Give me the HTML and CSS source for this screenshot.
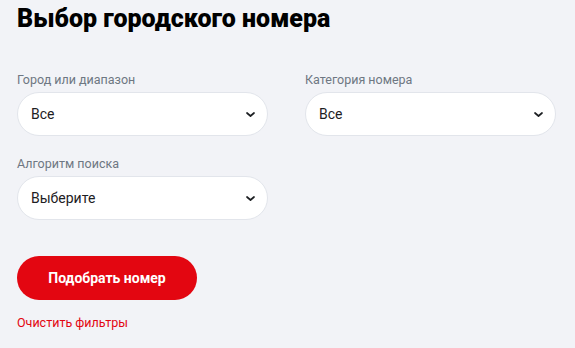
FILE: index.html
```html
<!DOCTYPE html>
<html lang="ru">
<head>
<meta charset="utf-8">
<title>Выбор городского номера</title>
<link rel="stylesheet" href="styles.css">
</head>
<body>
<main class="page">
  <h1 class="title">Выбор городского номера</h1>
  <div class="filters">
    <div class="field">
      <label class="label">Город или диапазон</label>
      <div class="select"><span>Все</span>
        <svg class="chev" width="9" height="5" viewBox="0 0 9 5"><path d="M1 1 L4.5 4 L8 1" fill="none" stroke="#1d2023" stroke-width="1.7" stroke-linecap="round" stroke-linejoin="round"/></svg>
      </div>
    </div>
    <div class="field">
      <label class="label">Категория номера</label>
      <div class="select"><span>Все</span>
        <svg class="chev" width="9" height="5" viewBox="0 0 9 5"><path d="M1 1 L4.5 4 L8 1" fill="none" stroke="#1d2023" stroke-width="1.7" stroke-linecap="round" stroke-linejoin="round"/></svg>
      </div>
    </div>
    <div class="field">
      <label class="label">Алгоритм поиска</label>
      <div class="select"><span>Выберите</span>
        <svg class="chev" width="9" height="5" viewBox="0 0 9 5"><path d="M1 1 L4.5 4 L8 1" fill="none" stroke="#1d2023" stroke-width="1.7" stroke-linecap="round" stroke-linejoin="round"/></svg>
      </div>
    </div>
  </div>
  <button class="submit">Подобрать номер</button>
  <a class="reset" href="#">Очистить фильтры</a>
</main>
</body>
</html>
```

FILE: styles.css
```css
html, body {
  margin: 0;
  padding: 0;
  background: #f2f3f7;
}
body {
  font-family: Roboto, "Noto Sans", Arial, sans-serif;
  color: #1d2023;
}
.page {
  padding: 5px 19px 0 17px;
  display: flex;
  flex-direction: column;
  align-items: flex-start;
}
.title {
  margin: 0;
  font-size: 25px;
  line-height: 28px;
  font-weight: 900;
  color: #000;
}
.filters {
  margin-top: 39px;
  width: 539px;
  display: grid;
  grid-template-columns: 251px 251px;
  column-gap: 37px;
  row-gap: 20px;
}
.field {
  display: flex;
  flex-direction: column;
  gap: 4px;
}
.label {
  font-size: 12.5px;
  line-height: 16px;
  color: #6e7782;
}
.select {
  box-sizing: border-box;
  height: 44px;
  background: #fff;
  border: 1px solid #e2e5eb;
  border-radius: 22px;
  display: flex;
  align-items: center;
  justify-content: space-between;
  padding: 0 12px 0 13px;
  font-size: 14px;
  color: #1d2023;
}
.chev {
  display: block;
}
.submit {
  margin-top: 36px;
  width: 180px;
  height: 44px;
  border: none;
  border-radius: 22px;
  background: #e30611;
  color: #fff;
  font-family: Roboto, "Noto Sans", Arial, sans-serif;
  font-size: 14px;
  font-weight: 700;
  padding: 0;
}
.reset {
  margin-top: 15px;
  font-size: 12.5px;
  line-height: 16px;
  color: #e30611;
  text-decoration: none;
}
```
